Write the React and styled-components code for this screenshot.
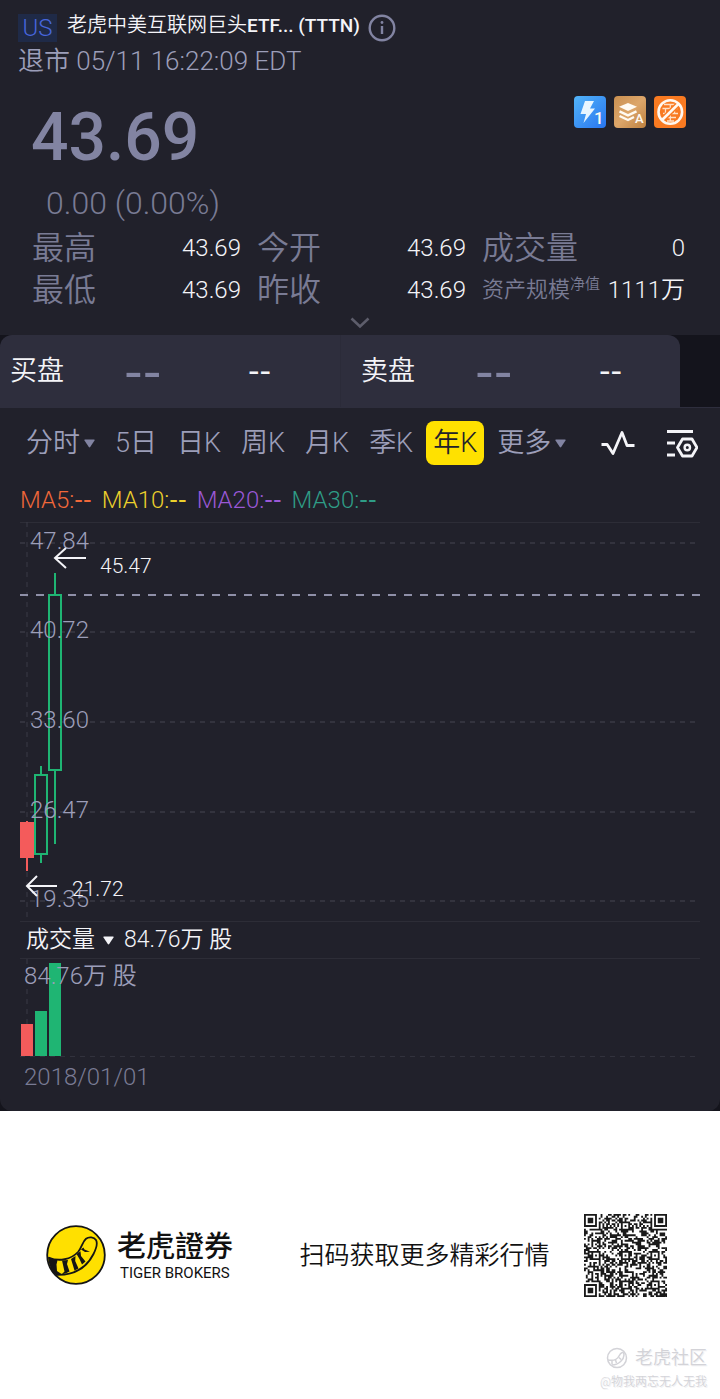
import React from 'react';
import styled, { createGlobalStyle } from 'styled-components';

const GlobalStyle = createGlobalStyle`
  * {
    box-sizing: border-box;
  }

  body {
    margin: 0;
    background: #ffffff;
    font-family: 'Roboto Light', Roboto, 'Noto Sans CJK SC DemiLight', 'Noto Sans CJK SC', sans-serif;
    font-weight: 400;
    line-height: 1.2;
  }

  button {
    border: none;
    padding: 0;
    background: none;
    color: inherit;
    font: inherit;
    cursor: pointer;
  }
`;

const colors = {
  panel: '#21212b',
  dark: '#14141c',
  depth: '#2e2e3d',
  line: '#2d2d37',
  muted: '#797b94',
  price: '#8284a2',
  label: '#9c9eb9',
  white: '#f4f4f8',
  red: '#f45b5b',
  green: '#1fb573',
  yellow: '#ffe100',
};

const PanelBack = styled.div`
  background: ${colors.dark};
`;

const Panel = styled.main`
  background: ${colors.panel};
  border-radius: 0 0 12px 12px;
  overflow: hidden;
`;

const TitleRow = styled.header`
  display: flex;
  align-items: center;
  height: 43px;
  padding: 12px 18px 0;
`;

const Market = styled.span`
  width: 39px;
  margin-right: 10px;
  background: #1f2a47;
  color: #4766dc;
  font-size: 24px;
  line-height: 28px;
  text-align: center;
`;

const Name = styled.h1`
  margin: 0 8px 4px 0;
  color: ${colors.white};
  font-size: 20px;
  font-weight: 400;
  line-height: 28px;

  b {
    font-family: Roboto, sans-serif;
    font-size: 19px;
    font-weight: 500;
  }
`;

const InfoButton = styled.button`
  display: flex;
  color: ${colors.price};
`;

const Status = styled.p`
  margin: 0;
  padding: 0 18px;
  color: ${colors.label};
  font-size: 26px;
  line-height: 36px;
`;

const PriceRow = styled.section`
  display: flex;
  align-items: flex-start;
  justify-content: space-between;
  padding: 17px 34px 0 31px;
`;

const Price = styled.div`
  color: ${colors.price};
  font-family: Roboto, sans-serif;
  font-size: 66px;
  font-weight: 500;
  line-height: 84px;
`;

const Badges = styled.div`
  display: flex;
  gap: 8px;

  svg {
    display: block;
  }

  text {
    fill: #fffaf2;
    font-family: Roboto, sans-serif;
    font-weight: 500;
  }
`;

const Change = styled.div`
  padding-left: 46px;
  color: ${colors.muted};
  font-size: 32px;
  line-height: 46px;
`;

const Stats = styled.dl`
  display: grid;
  grid-template-columns: 209fr 209fr 203fr;
  column-gap: 16px;
  margin: 0;
  padding: 1px 35px 0 32px;
`;

const Stat = styled.div`
  display: flex;
  align-items: center;
  justify-content: space-between;
  height: 42px;
  white-space: nowrap;

  dt {
    color: ${colors.muted};
    font-size: ${({ $small }) => ($small ? '22px' : '32px')};
    line-height: 42px;
  }

  dd {
    margin: 0;
    color: ${colors.white};
    font-size: 24px;
  }

  sup {
    font-size: 15px;
    line-height: 1;
  }
`;

const ExpandButton = styled.button`
  display: flex;
  align-items: center;
  justify-content: center;
  width: 100%;
  height: 24px;
`;

const DepthRow = styled.section`
  display: flex;
  padding-right: 40px;
  background: ${colors.dark};
  border-bottom: 1px solid ${colors.depth};
`;

const Depth = styled.div`
  flex: 1;
  display: grid;
  grid-template-columns: 1fr 1fr;
  background: ${colors.depth};
  border-radius: 12px 12px 0 0;
`;

const Side = styled.div`
  display: grid;
  grid-template-columns: 114px 124px 1fr;
  align-items: center;
  height: 72px;
  padding-left: ${({ $ask }) => ($ask ? '20px' : '10px')};
  border-left: ${({ $ask }) => ($ask ? '1px solid #2b2b39' : 'none')};
  color: ${colors.white};
  font-size: 27px;
`;

const Dashes = styled.span`
  font-family: 'DejaVu Sans', sans-serif;
  font-size: ${({ $size }) => $size}px;
  line-height: 28px;
  color: ${({ $muted }) => ($muted ? colors.price : 'inherit')};
`;

const Toolbar = styled.nav`
  display: flex;
  align-items: center;
  gap: 6px;
  padding: 13px 22px 13px 19px;
`;

const Tab = styled.button`
  display: flex;
  align-items: center;
  gap: 4px;
  height: 44px;
  padding: 0 7px;
  border-radius: 8px;
  background: ${({ $active }) => ($active ? colors.yellow : 'transparent')};
  color: ${({ $active }) => ($active ? '#21212b' : colors.label)};
  font-size: 27px;
  white-space: nowrap;
`;

const Tools = styled.div`
  display: flex;
  gap: 30px;
  margin-left: auto;

  button {
    display: flex;
  }
`;

const Averages = styled.div`
  display: flex;
  gap: 10px;
  padding: 0 20px;
  height: 44px;
  font-size: 24px;
  line-height: 44px;
`;

const Average = styled.span`
  display: flex;
  align-items: center;
  color: ${({ $color }) => $color};
`;

const ChartArea = styled.section`
  padding: 0 20px;
`;

const Plot = styled.svg`
  display: block;
  width: 100%;
  height: ${({ $height }) => $height}px;
  overflow: visible;
`;

const AxisText = styled.text`
  fill: ${colors.label};
  font-size: 24px;
`;

const MarkText = styled.text`
  fill: ${colors.white};
  font-size: 21px;
`;

const VolumeHead = styled.div`
  display: flex;
  align-items: center;
  gap: 10px;
  height: 38px;
  padding-left: 6px;
  border-top: 1px solid ${colors.line};
  border-bottom: 1px solid ${colors.line};
  color: ${colors.white};
  font-size: 23px;

  button {
    display: flex;
    align-items: center;
    gap: 8px;
  }
`;

const DateLabel = styled.div`
  padding: 0 4px 14px;
  color: ${colors.muted};
  font-size: 24px;
  line-height: 40px;
`;

const Footer = styled.footer`
  padding: 103px 13px 6px 46px;
  color: #111111;
`;

const Promo = styled.div`
  display: flex;
  align-items: center;
  justify-content: space-between;
  padding-right: 40px;
`;

const Brand = styled.div`
  display: flex;
  align-items: center;
  gap: 11px;
  padding-bottom: 2px;
`;

const BrandName = styled.div`
  font-family: Roboto, 'Noto Sans CJK TC', sans-serif;
  font-size: 29px;
  font-weight: 500;
  line-height: 36px;
`;

const BrandLatin = styled.div`
  padding-left: 3px;
  font-family: Roboto, sans-serif;
  font-size: 15px;
  line-height: 16px;
`;

const Slogan = styled.p`
  margin: 0 0 0 32px;
  font-size: 25px;
`;

const Credit = styled.div`
  display: flex;
  flex-direction: column;
  align-items: flex-end;
  margin-top: 48px;
  color: #d3d3d8;
  font-size: 12px;
  line-height: 22px;
  text-shadow: 1px 1px 0 #f1f1f3;
`;

const Community = styled.div`
  display: flex;
  align-items: center;
  gap: 7px;
  font-size: 18px;
  font-weight: 500;
  line-height: 26px;
`;

const periods = [
  { name: '分时', menu: true },
  { name: '5日' },
  { name: '日K' },
  { name: '周K' },
  { name: '月K' },
  { name: '季K' },
  { name: '年K', active: true },
  { name: '更多', menu: true },
];

const stats = [
  { label: '最高', value: '43.69' },
  { label: '今开', value: '43.69' },
  { label: '成交量', value: '0' },
  { label: '最低', value: '43.69' },
  { label: '昨收', value: '43.69' },
  { label: '资产规模', note: '净值', value: '1111万' },
];

const averages = [
  { name: 'MA5:', color: '#f0683a' },
  { name: 'MA10:', color: '#ecd02c' },
  { name: 'MA20:', color: '#9a58d6' },
  { name: 'MA30:', color: '#2f9c86' },
];

const ticks = [47.84, 40.72, 33.6, 26.47, 19.35];

const candles = [
  { x: 7, high: 25.72, top: 25.56, bottom: 22.85, low: 21.72, volume: 32 },
  { x: 21, high: 30.09, top: 29.4, bottom: 23.1, low: 22.38, volume: 45, up: true },
  { x: 35, high: 45.47, top: 43.69, bottom: 29.75, low: 23.89, volume: 93, up: true },
];

const toY = (price) => Math.round(21 + (47.84 - price) * 12.566);

const Caret = ({ color = colors.price }) => (
  <svg width='11' height='9' viewBox='0 0 11 9' aria-hidden='true'>
    <path d='M1 0.5h9q1 0 .5 1L6.2 8q-.7.8-1.4 0L.5 1.500Q0 .5 1 .5z' fill={color} />
  </svg>
);

const BadgeIcons = () => (
  <Badges>
    <svg width='32' height='32' viewBox='0 0 32 32' role='img' aria-label='Level 1'>
      <defs>
        <linearGradient id='blue' x1='0' y1='0' x2='1' y2='1'>
          <stop offset='0' stopColor='#52b4f8' />
          <stop offset='1' stopColor='#2875f0' />
        </linearGradient>
      </defs>
      <rect width='32' height='32' rx='4' fill='url(#blue)' />
      <path d='M11 5h9l-4 7.500h5L9.500 27l2.500-9H6.500z' fill='#e8f6ff' />
      <text x='20' y='28' fontSize='17'>
        1
      </text>
    </svg>
    <svg width='32' height='32' viewBox='0 0 32 32' role='img' aria-label='A'>
      <defs>
        <linearGradient id='gold' x1='0' y1='0' x2='1' y2='1'>
          <stop offset='0' stopColor='#c98f50' />
          <stop offset='.5' stopColor='#dda66a' />
          <stop offset='1' stopColor='#bd803f' />
        </linearGradient>
      </defs>
      <rect width='32' height='32' rx='4' fill='url(#gold)' />
      <path d='M14 7l9 3.800-9 4.200-9-4.200z' fill='#fffaf2' />
      <path
        d='M5.500 15.300l8.500 4 8.500-4M5.500 20l8.500 4 6-3'
        fill='none'
        stroke='#fffaf2'
        strokeWidth='2.400'
      />
      <text x='21' y='27' fontSize='13'>
        A
      </text>
    </svg>
    <svg width='32' height='32' viewBox='0 0 32 32' role='img' aria-label='禁止卖空'>
      <rect width='32' height='32' rx='4' fill='#f97a21' />
      <path
        d='M10 8.500h13M8.500 12.500h15M11.500 12.500v5M20.500 12.500v5M9 17.500h15M16.300 8.500v4M16.300 17.500V25M11 21.500h11M13 25h7'
        fill='none'
        stroke='#ffe0c5'
        strokeWidth='1.300'
      />
      <path d='M7.800 24.200L24.600 7.800' stroke='#f97a21' strokeWidth='5.500' />
      <path d='M7.800 24.200L24.600 7.800' stroke='#fff8f0' strokeWidth='2.600' />
      <circle cx='16.300' cy='16' r='11.800' fill='none' stroke='#fff8f0' strokeWidth='2.600' />
    </svg>
  </Badges>
);

const PriceChart = () => (
  <Plot $height={399} role='img' aria-label='年K'>
    <line x1='0' x2='100%' y1='0.5' y2='0.5' stroke={colors.line} />
    <line x1='7' x2='7' y1='0' y2='399' stroke='#3a3a46' strokeDasharray='5 5' />
    {ticks.map((tick) => (
      <line
        key={tick}
        x1='0'
        x2='100%'
        y1={toY(tick)}
        y2={toY(tick)}
        stroke='#3a3a46'
        strokeWidth='1.500'
        strokeDasharray='5 5'
      />
    ))}
    <line
      x1='0'
      x2='100%'
      y1={toY(43.69)}
      y2={toY(43.69)}
      stroke='#8f90a8'
      strokeWidth='2'
      strokeDasharray='8 8'
    />
    {candles.map(({ x, high, top, bottom, low, up }) => (
      <g key={x} stroke={up ? colors.green : colors.red} strokeWidth='2'>
        <line x1={x} x2={x} y1={toY(high)} y2={toY(top)} />
        <line x1={x} x2={x} y1={toY(bottom)} y2={toY(low)} />
        <rect
          x={x - 6}
          y={toY(top)}
          width='12'
          height={toY(bottom) - toY(top)}
          fill={up ? 'none' : colors.red}
        />
      </g>
    ))}
    {ticks.map((tick) => (
      <AxisText key={tick} x='10' y={toY(tick) + 6}>
        {tick.toFixed(2)}
      </AxisText>
    ))}
    <path d='M66 36H35M46 26L35 36l11 10' fill='none' stroke={colors.white} strokeWidth='2' />
    <MarkText x='80' y='51'>
      45.47
    </MarkText>
    <path d='M37 364H7M17 354L7 364l10 10' fill='none' stroke={colors.white} strokeWidth='2' />
    <MarkText x='52' y='374'>
      21.72
    </MarkText>
  </Plot>
);

const VolumeChart = () => (
  <Plot $height={98} role='img' aria-label='成交量'>
    <line x1='7' x2='7' y1='0' y2='98' stroke='#3a3a46' strokeDasharray='5 5' />
    <line x1='0' x2='100%' y1='97.5' y2='97.5' stroke='#32323d' strokeDasharray='5 5' />
    {candles.map(({ x, volume, up }) => (
      <rect
        key={x}
        x={x - 6}
        y={97 - volume}
        width='12'
        height={volume}
        fill={up ? colors.green : colors.red}
      />
    ))}
    <AxisText x='4' y='25'>
      84.76万 股
    </AxisText>
  </Plot>
);

const SIZE = 45;
const anchors = [6, 22, 38];

const ring = (dx, dy) => Math.max(Math.abs(dx), Math.abs(dy));

const isDark = (col, row) => {
  const corners = [
    [3, 3],
    [SIZE - 4, 3],
    [3, SIZE - 4],
  ];
  for (const [cx, cy] of corners) {
    const r = ring(col - cx, row - cy);
    if (r <= 4) return r <= 1 || r === 3;
  }
  for (const cx of anchors) {
    for (const cy of anchors) {
      const r = ring(col - cx, row - cy);
      if (r <= 2) return r !== 1;
    }
  }
  if (row === 6) return col % 2 === 0;
  if (col === 6) return row % 2 === 0;
  let n = (col * 374761393 + row * 668265263) | 0;
  n = Math.imul(n ^ (n >>> 13), 1274126177);
  return ((n ^ (n >>> 16)) & 255) < 132;
};

const qrPath = () => {
  let d = '';
  for (let row = 0; row < SIZE; row += 1) {
    for (let col = 0; col < SIZE; col += 1) {
      if (isDark(col, row)) d += `M${col} ${row}h1v1h-1z`;
    }
  }
  return d;
};

const QrCode = () => (
  <svg width='83' height='83' viewBox={`0 0 ${SIZE} ${SIZE}`} role='img' aria-label='QR'>
    <path d={qrPath()} fill='#1a1a1a' />
  </svg>
);

const TigerLogo = () => (
  <svg width='60' height='60' viewBox='0 0 60 60' aria-hidden='true'>
    <circle cx='30' cy='30' r='28.800' fill='#ffe000' stroke='#151515' strokeWidth='1.800' />
    <path
      d='M2.500 32.500C13 37 25 34.500 32 27c4-4.500 4.500-10.500 8-13.300 3-2.200 8-1.700 10 1.300 2 3.500 0 9-2.500 14C41 42 30 50.500 10 49.800'
      fill='none'
      stroke='#151515'
      strokeWidth='1.800'
    />
    <path
      d='M2 32l9.500 3.200-1 4.300.5 6.500 4.500 3-6 .8C5 45.500 2.500 39 2 32zM16 35.500l6-.5-1 4 2.500 7.500-3 1.500-5 1.500 3-3zM25 34l4.500-3-.3 5 3.300 7.500-4 2-1.500-5zM30.500 29l4-2.800.5 4.800 4.500 5.500-3.500 3-2.500-5.500zM35 24.500l2.300-2 1.200 2 5.500 2.300-5 .2z'
      fill='#151515'
    />
  </svg>
);

const App = () => {
  return (
    <>
      <GlobalStyle />
      <PanelBack>
        <Panel>
          <TitleRow>
            <Market>US</Market>
            <Name>
              老虎中美互联网巨头<b>ETF... (TTTN)</b>
            </Name>
            <InfoButton aria-label='info'>
              <svg width='28' height='28' viewBox='0 0 28 28' fill='none' stroke='currentColor'>
                <circle cx='14' cy='14' r='12.300' strokeWidth='2.400' />
                <path d='M14 12v8' strokeWidth='2.400' />
                <circle cx='14' cy='8.500' r='1.400' fill='currentColor' stroke='none' />
              </svg>
            </InfoButton>
          </TitleRow>
          <Status>退市 05/11 16:22:09 EDT</Status>
          <PriceRow>
            <Price>43.69</Price>
            <BadgeIcons />
          </PriceRow>
          <Change>0.00 (0.00%)</Change>
          <Stats>
            {stats.map(({ label, note, value }) => (
              <Stat key={label} $small={Boolean(note)}>
                <dt>
                  {label}
                  {note && <sup>{note}</sup>}
                </dt>
                <dd>{value}</dd>
              </Stat>
            ))}
          </Stats>
          <ExpandButton aria-label='expand'>
            <svg width='20' height='12' viewBox='0 0 20 12'>
              <path d='M1.500 1.500L10 9.500l8.500-8' fill='none' stroke='#5d5d6b' strokeWidth='2.600' />
            </svg>
          </ExpandButton>
          <DepthRow>
            <Depth>
              {['买盘', '卖盘'].map((side, index) => (
                <Side key={side} $ask={index === 1}>
                  {side}
                  <Dashes $size={52} $muted>
                    --
                  </Dashes>
                  <Dashes $size={32}>--</Dashes>
                </Side>
              ))}
            </Depth>
          </DepthRow>
          <Toolbar>
            {periods.map(({ name, menu, active }) => (
              <Tab key={name} $active={active}>
                {name}
                {menu && <Caret />}
              </Tab>
            ))}
            <Tools>
              <button aria-label='indicator'>
                <svg width='36' height='32' viewBox='0 0 36 32'>
                  <path
                    d='M1.500 17.500h5.700l5.800 9L22 5.500l5 13h7.500'
                    fill='none'
                    stroke={colors.white}
                    strokeWidth='2.800'
                    strokeLinejoin='round'
                  />
                </svg>
              </button>
              <button aria-label='settings'>
                <svg
                  width='32'
                  height='32'
                  viewBox='0 0 32 32'
                  fill='none'
                  stroke={colors.white}
                  strokeWidth='2.800'
                >
                  <path d='M1 4.500h26M1 16h8M1 28h8' />
                  <path d='M16.500 12h9.500l5 8.500-5 8.500h-9.500l-5-8.500z' strokeLinejoin='round' />
                  <circle cx='21.300' cy='20.500' r='2.700' strokeWidth='2.400' />
                </svg>
              </button>
            </Tools>
          </Toolbar>
          <Averages>
            {averages.map(({ name, color }) => (
              <Average key={name} $color={color}>
                {name}
                <Dashes $size={24}>--</Dashes>
              </Average>
            ))}
          </Averages>
          <ChartArea>
            <PriceChart />
            <VolumeHead>
              <button>
                成交量
                <Caret color={colors.white} />
              </button>
              <span>84.76万 股</span>
            </VolumeHead>
            <VolumeChart />
            <DateLabel>2018/01/01</DateLabel>
          </ChartArea>
        </Panel>
      </PanelBack>
      <Footer>
        <Promo>
          <Brand>
            <TigerLogo />
            <div>
              <BrandName>老虎證券</BrandName>
              <BrandLatin>TIGER BROKERS</BrandLatin>
            </div>
          </Brand>
          <Slogan>扫码获取更多精彩行情</Slogan>
          <QrCode />
        </Promo>
        <Credit>
          <Community>
            <svg width='22' height='22' viewBox='0 0 22 22' fill='none' stroke='#d3d3d8'>
              <circle cx='11' cy='11' r='9.500' strokeWidth='1.500' />
              <path d='M2 13c5 1 9 0 11-4s5-5 5-1-5 10-12 10' strokeWidth='1.500' />
              <path d='M6 13.500v4M9.500 13l1 3M13 10.500l2 2' strokeWidth='1.500' />
            </svg>
            老虎社区
          </Community>
          @物我两忘无人无我
        </Credit>
      </Footer>
    </>
  );
};

export default App;
